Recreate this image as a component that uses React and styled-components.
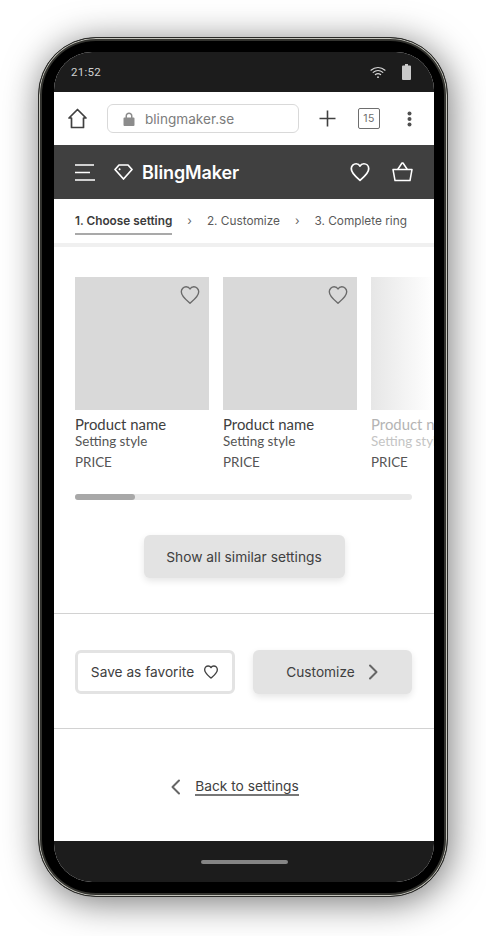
import React from 'react';
import styled, { createGlobalStyle } from 'styled-components';

const GlobalStyle = createGlobalStyle`
  html, body {
    margin: 0;
    padding: 0;
    background: #fff;
    overflow: hidden;
  }
  * {
    box-sizing: border-box;
  }
`;

const Page = styled.div`
  width: 486px;
  height: 936px;
  padding: 37px 38px 39px;
  background: #fff;
`;

const Phone = styled.div`
  width: 410px;
  height: 860px;
  padding: 14px 13px 14px 15px;
  background: #000;
  border: 1px solid #2a2a28;
  border-radius: 58px;
  box-shadow:
    inset 0 0 0 1px #c4c4bc,
    inset 0 0 0 3px #33332f,
    2px 5px 36px rgba(0, 0, 0, 0.55);
`;

const Screen = styled.div`
  height: 100%;
  display: flex;
  flex-direction: column;
  border-radius: 38px;
  overflow: hidden;
  background: #fff;
  font-family: Inter, "Liberation Sans", sans-serif;
`;

const StatusBar = styled.div`
  height: 40px;
  flex: none;
  display: flex;
  align-items: center;
  justify-content: space-between;
  padding: 0 23px 0 17px;
  background: #1c1c1c;
  color: #d0d0d0;
  font-family: Roboto, sans-serif;
  font-size: 11.5px;
  letter-spacing: 0.3px;
`;

const StatusIcons = styled.div`
  display: flex;
  align-items: center;
  gap: 16px;
`;

const BrowserBar = styled.div`
  height: 53px;
  flex: none;
  display: flex;
  align-items: center;
  padding: 0 22px 0 14px;
  background: #fff;
`;

const AddressBox = styled.div`
  width: 192px;
  height: 29px;
  margin-left: 20px;
  display: flex;
  align-items: center;
  gap: 10px;
  padding-left: 15px;
  border: 1px solid #d9d9d9;
  border-radius: 6px;
  color: #7c7c7c;
  font-size: 13.6px;
`;

const BrowserActions = styled.div`
  margin-left: auto;
  display: flex;
  align-items: center;
  gap: 22px;
`;

const TabCount = styled.div`
  width: 22px;
  height: 21px;
  display: flex;
  align-items: center;
  justify-content: center;
  border: 1.5px solid #6e6e6e;
  border-radius: 2px;
  color: #6e6e6e;
  font-size: 10.5px;
  letter-spacing: 0.5px;
`;

const MenuDots = styled.svg`
  margin-left: 5px;
`;

const Header = styled.header`
  height: 54px;
  flex: none;
  display: flex;
  align-items: center;
  padding: 0 21px 0 21px;
  background: #404040;
  color: #fff;
`;

const Brand = styled.div`
  margin-left: 19px;
  display: flex;
  align-items: center;
  gap: 9px;
  font-size: 18px;
  font-weight: 600;
  letter-spacing: -0.1px;
`;

const HeaderActions = styled.div`
  margin-left: auto;
  display: flex;
  align-items: center;
  gap: 21px;
`;

const Steps = styled.nav`
  height: 44px;
  flex: none;
  display: flex;
  align-items: center;
  padding: 0 0 0 21px;
  color: #595959;
  font-size: 11.8px;
  line-height: 14px;
  white-space: nowrap;
`;

const Step = styled.div`
  color: ${p => (p.$active ? '#3c3c3c' : '#5a5a5a')};
  font-weight: ${p => (p.$active ? 600 : 400)};
  ${p => p.$active && `
    padding: 7px 0 5px;
    border-bottom: 2px solid #a9a9a9;
  `}
`;

const StepArrow = styled.span`
  margin: 0 15px;
  color: #666;
  font-size: 12px;
`;

const Band = styled.div`
  height: 4px;
  flex: none;
  background: #f0f0f0;
`;

const Main = styled.main`
  flex: 1;
  display: flex;
  flex-direction: column;
  background: #fff;
`;

const Carousel = styled.div`
  display: flex;
  gap: 14px;
  padding: 30px 0 0 21px;
  overflow: hidden;
`;

const Card = styled.article`
  flex: none;
  width: 134px;
`;

const Thumb = styled.div`
  position: relative;
  height: 133px;
  background: ${p => (p.$faded ? 'linear-gradient(90deg, #e6e6e6, #ffffff 47%)' : '#d9d9d9')};
`;

const FavIcon = styled.div`
  position: absolute;
  top: 7px;
  right: 8px;
  display: flex;
  color: #6a6a6a;
`;

const ProductName = styled.div`
  margin-top: 5px;
  font-family: Lato, sans-serif;
  font-size: 14.9px;
  line-height: 18px;
  color: ${p => (p.$faded ? '#b4b4b4' : '#404040')};
  white-space: nowrap;
`;

const ProductStyle = styled.div`
  font-family: Lato, sans-serif;
  font-size: 13.4px;
  line-height: 17px;
  color: ${p => (p.$faded ? '#c4c4c4' : '#555')};
  white-space: nowrap;
`;

const Price = styled.div`
  margin-top: 4px;
  font-family: Lato, sans-serif;
  font-size: 13.4px;
  line-height: 17px;
  color: #555;
`;

const ScrollTrack = styled.div`
  height: 6px;
  margin: 23px 22px 0 21px;
  border-radius: 3px;
  background: #e8e8e8;
`;

const ScrollThumb = styled.div`
  height: 100%;
  border-radius: 3px;
  background: #a8a8a8;
`;

const ShowAll = styled.button`
  align-self: center;
  width: 201px;
  height: 43px;
  margin-top: 35px;
  border: 0;
  border-radius: 6px;
  background: #e3e3e3;
  box-shadow: 0 3px 7px rgba(0, 0, 0, 0.1);
  color: #404040;
  font: 400 13.75px Inter, sans-serif;
`;

const Actions = styled.div`
  display: grid;
  grid-template-columns: 160px 159px;
  justify-content: space-between;
  align-items: stretch;
  height: 116px;
  margin-top: 35px;
  padding: 36px 22px 34px 21px;
  border-top: 1.5px solid #d2d2d2;
  border-bottom: 1.5px solid #d2d2d2;
`;

const ActionButton = styled.button`
  display: flex;
  align-items: center;
  justify-content: center;
  gap: ${p => (p.$primary ? '13px' : '9px')};
  padding: 0;
  border: ${p => (p.$primary ? '0' : '3px solid #e3e3e3')};
  border-radius: 6px;
  background: ${p => (p.$primary ? '#e3e3e3' : '#fff')};
  box-shadow: ${p => (p.$primary ? '0 3px 7px rgba(0, 0, 0, 0.1)' : 'none')};
  color: #404040;
  font: 400 13.7px Inter, sans-serif;
`;

const BackRow = styled.div`
  flex: 1;
  display: flex;
  align-items: center;
  justify-content: center;
  gap: 14px;
  padding: 4px 19px 0 0;
  color: #404040;
  font-size: 13.75px;
`;

const BackLink = styled.a`
  color: inherit;
  border-bottom: 2px solid #777;
  line-height: 16px;
`;

const BottomNav = styled.div`
  height: 41px;
  flex: none;
  display: flex;
  align-items: center;
  justify-content: center;
  background: #1c1c1c;
`;

const HomeBar = styled.div`
  width: 87px;
  height: 4px;
  border-radius: 2px;
  background: #858585;
`;

const Heart = ({ size = 22, color = 'currentColor', stroke = 2 }) => (
  <svg width={size} height={size} viewBox="0 0 24 24" fill="none" stroke={color} strokeWidth={stroke} strokeLinejoin="round">
    <path d="M12 21 C8 17.5 2.5 13.5 2.5 8.5 C2.5 5.3 5 3 7.8 3 C9.6 3 11.2 3.9 12 5.5 C12.8 3.9 14.4 3 16.2 3 C19 3 21.5 5.3 21.5 8.5 C21.5 13.5 16 17.5 12 21 Z" />
  </svg>
);

const Chevron = ({ dir = 'right' }) => (
  <svg width="11" height="16" viewBox="0 0 11 16" fill="none" stroke="#666" strokeWidth="2" strokeLinecap="round" strokeLinejoin="round">
    <path d={dir === 'right' ? 'M2 1.5 L8.5 8 L2 14.5' : 'M9 1.5 L2.5 8 L9 14.5'} />
  </svg>
);

const products = [
  { id: 1 },
  { id: 2 },
  { id: 3, faded: true },
];

export default function App() {
  return (
    <>
      <GlobalStyle />
      <Page>
        <Phone>
          <Screen>
            <StatusBar>
              <span>21:52</span>
              <StatusIcons>
                <svg width="16" height="13" viewBox="0 0 16 13" fill="none" stroke="#d8d8d8" strokeWidth="1.2" strokeLinecap="round">
                  <path d="M1 4.2 C5 0.6 11 0.6 15 4.2" />
                  <path d="M3.2 6.4 C6 4 10 4 12.8 6.4" />
                  <path d="M5.4 8.6 C7 7.4 9 7.4 10.6 8.6" />
                  <circle cx="8" cy="11.2" r="0.9" fill="#d8d8d8" stroke="none" />
                </svg>
                <svg width="9" height="16" viewBox="0 0 9 16">
                  <path d="M3 0 H6 V1.5 H8 Q9 1.5 9 2.5 V15 Q9 16 8 16 H1 Q0 16 0 15 V2.5 Q0 1.5 1 1.5 H3 Z" fill="#c9c9c9" />
                </svg>
              </StatusIcons>
            </StatusBar>

            <BrowserBar>
              <svg width="19" height="21" viewBox="0 0 19 21" fill="none" stroke="#404040" strokeWidth="1.7" strokeLinejoin="round">
                <path d="M9.5 1.5 L18 10 H15.5 V19.5 H3.5 V10 H1 Z" />
              </svg>
              <AddressBox>
                <svg width="12" height="14" viewBox="0 0 12 14">
                  <path d="M1.5 5.5 H2.5 V4 C2.5 2 4 0.6 6 0.6 C8 0.6 9.5 2 9.5 4 V5.5 H10.5 Q11.5 5.5 11.5 6.5 V13 Q11.5 14 10.5 14 H1.5 Q0.5 14 0.5 13 V6.5 Q0.5 5.5 1.5 5.5 Z M4 5.5 H8 V4 C8 2.9 7.1 2.1 6 2.1 C4.9 2.1 4 2.9 4 4 Z" fill="#8c8c8c" fillRule="evenodd" />
                </svg>
                blingmaker.se
              </AddressBox>
              <BrowserActions>
                <svg width="17" height="17" viewBox="0 0 17 17" stroke="#404040" strokeWidth="1.6">
                  <path d="M8.5 0.5 V16.5 M0.5 8.5 H16.5" />
                </svg>
                <TabCount>15</TabCount>
                <MenuDots width="5" height="16" viewBox="0 0 5 16" fill="#505050">
                  <circle cx="2.5" cy="2.5" r="2" />
                  <circle cx="2.5" cy="8" r="2" />
                  <circle cx="2.5" cy="13.5" r="2" />
                </MenuDots>
              </BrowserActions>
            </BrowserBar>

            <Header>
              <svg width="20" height="17" viewBox="0 0 20 17" stroke="#fff" strokeWidth="1.6">
                <path d="M0 1 H19 M0 8.5 H15 M0 16 H20" />
              </svg>
              <Brand>
                <svg width="19" height="16" viewBox="0 0 19 16" fill="none" stroke="#fff" strokeWidth="1.7" strokeLinejoin="round">
                  <path d="M5 1 H14 L18 5.5 L9.5 15 L1 5.5 Z" />
                  <path d="M6 4.5 L5.2 6" />
                </svg>
                BlingMaker
              </Brand>
              <HeaderActions>
                <Heart size={22} color="#fff" stroke={1.9} />
                <svg width="21" height="20" viewBox="0 0 21 20" fill="none" stroke="#fff" strokeWidth="1.5" strokeLinejoin="round" strokeLinecap="round">
                  <path d="M1 7.5 H20 L18 18.5 H3 Z" />
                  <path d="M6 7 L10 1 H11 L15 7" />
                </svg>
              </HeaderActions>
            </Header>

            <Steps>
              <Step $active>1. Choose setting</Step>
              <StepArrow>›</StepArrow>
              <Step>2. Customize</Step>
              <StepArrow>›</StepArrow>
              <Step>3. Complete ring</Step>
            </Steps>
            <Band />

            <Main>
              <Carousel>
                {products.map(product => (
                  <Card key={product.id}>
                    <Thumb $faded={product.faded}>
                      {!product.faded && (
                        <FavIcon>
                          <Heart size={22} stroke={1.5} />
                        </FavIcon>
                      )}
                    </Thumb>
                    <ProductName $faded={product.faded}>Product name</ProductName>
                    <ProductStyle $faded={product.faded}>Setting style</ProductStyle>
                    <Price>PRICE</Price>
                  </Card>
                ))}
              </Carousel>

              <ScrollTrack>
                <ScrollThumb style={{ width: `${(60 / 337) * 100}%` }} />
              </ScrollTrack>

              <ShowAll>Show all similar settings</ShowAll>

              <Actions>
                <ActionButton>
                  Save as favorite
                  <Heart size={16} color="#404040" stroke={2} />
                </ActionButton>
                <ActionButton $primary>
                  Customize
                  <Chevron dir="right" />
                </ActionButton>
              </Actions>

              <BackRow>
                <Chevron dir="left" />
                <BackLink>Back to settings</BackLink>
              </BackRow>
            </Main>

            <BottomNav>
              <HomeBar />
            </BottomNav>
          </Screen>
        </Phone>
      </Page>
    </>
  );
}
